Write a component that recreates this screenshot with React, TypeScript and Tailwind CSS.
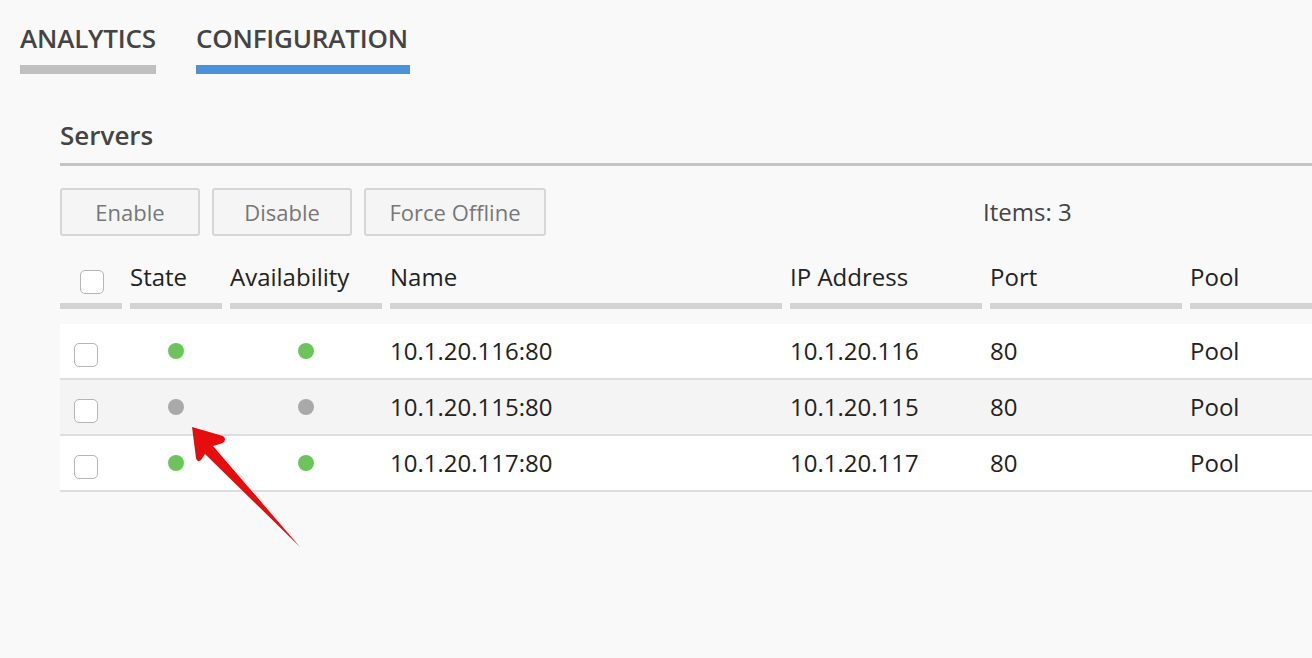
import React from "react";

const cols = [70, 100, 160, 400, 200, 200, 130];

function Dot({ on }: { on: boolean }) {
  return <span className={`block w-[16px] h-[16px] rounded-full ${on ? "bg-[#6cc45a]" : "bg-[#a9a9a9]"}`} />;
}

function Box({ className = "" }: { className?: string }) {
  return <span className={`block w-[24px] h-[24px] rounded-[5px] border border-[#b5b5b5] bg-white ${className}`} />;
}

const rows = [
  { name: "10.1.20.116:80", ip: "10.1.20.116", on: true, bg: "bg-white" },
  { name: "10.1.20.115:80", ip: "10.1.20.115", on: false, bg: "bg-[#f4f4f4]" },
  { name: "10.1.20.117:80", ip: "10.1.20.117", on: true, bg: "bg-white" },
];

export default function App() {
  return (
    <div className="relative w-[1312px] h-[658px] overflow-hidden bg-[#f9f9f9] text-[#222]" style={{ fontFamily: '"Open Sans", sans-serif' }}>
      {/* Tabs */}
      <div className="flex gap-[40px] pl-[20px] pt-[20px]">
        <div className="flex flex-col">
          <span className="text-[26px] leading-[36px] font-semibold text-[#444] tracking-[-0.2px]">ANALYTICS</span>
          <span className="mt-[9px] h-[9px] w-[136px] bg-[#c0c0c0]" />
        </div>
        <div className="flex flex-col">
          <span className="text-[26px] leading-[36px] font-semibold text-[#444] tracking-[-0.2px]">CONFIGURATION</span>
          <span className="mt-[9px] h-[9px] w-[214px] bg-[#4a93dc]" />
        </div>
      </div>

      <div className="pl-[60px] pt-[44px]">
        <div className="text-[26px] leading-[34px] font-semibold text-[#444]">Servers</div>
        <div className="mt-[11px] h-[3px] bg-[#c4c4c4]" />

        <div className="flex items-center mt-[22px] h-[48px]">
          <div className="flex gap-[12px]">
            {[
              ["Enable", "w-[140px]"],
              ["Disable", "w-[140px]"],
              ["Force Offline", "w-[182px]"],
            ].map(([t, w]) => (
              <div key={t} className={`${w} h-[48px] flex items-center justify-center rounded-[3px] border-2 border-[#d6d6d6] bg-[#f5f5f5] text-[22px] text-[#777]`}>
                {t}
              </div>
            ))}
          </div>
          <div className="ml-[437px] text-[24px] text-[#444]">Items: 3</div>
        </div>

        {/* Header */}
        <div className="flex mt-[20px]">
          {["", "State", "Availability", "Name", "IP Address", "Port", "Pool"].map((h, i) => (
            <div key={i} className="flex flex-col shrink-0" style={{ width: cols[i] }}>
              <div className="h-[42px] flex items-center text-[24px]">
                {i === 0 ? <Box className="ml-[20px] mt-[10px]" /> : h}
              </div>
              <div className={`mt-[5px] h-[6px] bg-[#d3d3d3] ${i === 6 ? "" : "mr-[8px]"}`} />
            </div>
          ))}
        </div>

        {/* Rows */}
        <div className="mt-[15px]">
          {rows.map((r) => (
            <div key={r.name} className={`flex h-[56px] border-b-2 border-[#dedede] ${r.bg} text-[24px]`}>
              <div className="shrink-0 flex items-center" style={{ width: cols[0] }}>
                <Box className="ml-[14px] mt-[8px]" />
              </div>
              <div className="shrink-0 flex items-center justify-center pr-[8px]" style={{ width: cols[1] }}>
                <Dot on={r.on} />
              </div>
              <div className="shrink-0 flex items-center justify-center pr-[8px]" style={{ width: cols[2] }}>
                <Dot on={r.on} />
              </div>
              <div className="shrink-0 flex items-center" style={{ width: cols[3] }}>{r.name}</div>
              <div className="shrink-0 flex items-center" style={{ width: cols[4] }}>{r.ip}</div>
              <div className="shrink-0 flex items-center" style={{ width: cols[5] }}>80</div>
              <div className="shrink-0 flex items-center" style={{ width: cols[6] }}>Pool</div>
            </div>
          ))}
        </div>
      </div>

      {/* Annotation arrow */}
      <svg className="absolute left-0 top-0 pointer-events-none" width="1312" height="658">
        <path
          d="M192 427 L223 436 Q227 439 223 443 L213 446 L300 547 L205 454 L201 460 Q197 463 196 458 Z"
          fill="#e50d0d"
        />
      </svg>
    </div>
  );
}
